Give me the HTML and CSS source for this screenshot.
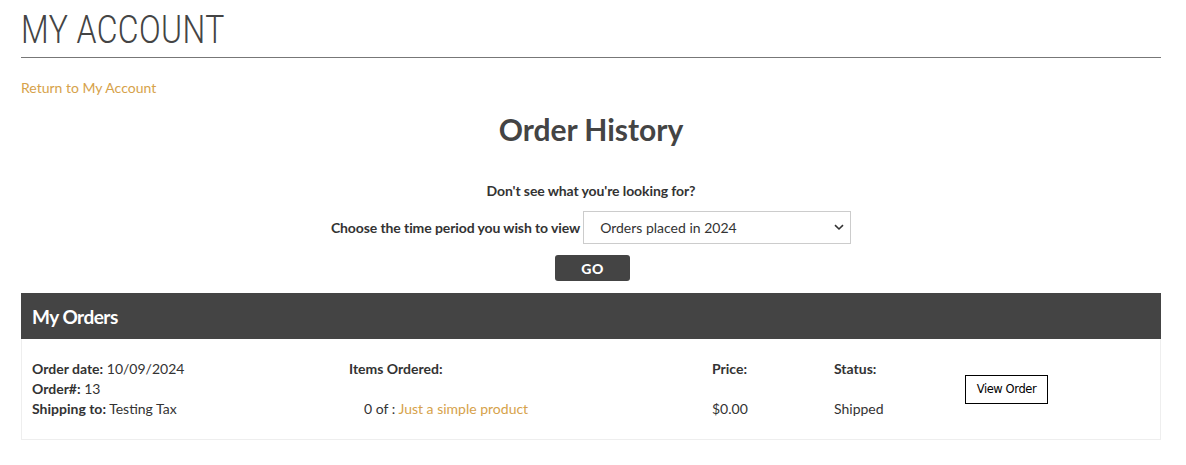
FILE: index.html
```html
<!DOCTYPE html>
<html>
<head>
<meta charset="utf-8">
<link rel="stylesheet" href="styles.css">
</head>
<body>
<div class="page">
  <h1 class="page-title"><span class="page-title-text">MY ACCOUNT</span></h1>
  <a class="back-link" href="#">Return to My Account</a>
  <h2 class="section-title">Order History</h2>
  <form class="filter">
    <p class="filter-hint">Don't see what you're looking for?</p>
    <div class="filter-row">
      <label class="filter-label">Choose the time period you wish to view</label>
      <div class="select">
        <span>Orders placed in 2024</span>
        <svg class="chev" width="10" height="7" viewBox="0 0 10 7"><path d="M1 1.2 L5 5 L9 1.2" fill="none" stroke="#333" stroke-width="1.6"/></svg>
      </div>
    </div>
    <button type="button" class="go">GO</button>
  </form>
  <div class="orders">
    <div class="orders-head">My Orders</div>
    <div class="orders-body">
      <div class="col col-info">
        <div><b>Order date:</b> 10/09/2024</div>
        <div><b>Order#:</b> 13</div>
        <div><b>Shipping to:</b> Testing Tax</div>
      </div>
      <div class="col col-items">
        <div><b>Items Ordered:</b></div>
        <div>&nbsp;</div>
        <div class="item-line">0 of : <a href="#">Just a simple product</a></div>
      </div>
      <div class="col col-price">
        <div><b>Price:</b></div>
        <div>&nbsp;</div>
        <div>$0.00</div>
      </div>
      <div class="col col-status">
        <div><b>Status:</b></div>
        <div>&nbsp;</div>
        <div>Shipped</div>
      </div>
      <div class="col col-action">
        <button type="button" class="view">View Order</button>
      </div>
    </div>
  </div>
</div>
</body>
</html>
```

FILE: styles.css
```css
* { box-sizing: border-box; }
html, body { margin: 0; padding: 0; background: #fff; }
body {
  font-family: Lato, "Open Sans", sans-serif;
  font-size: 14px;
  color: #333;
}
.page {
  width: 1140px;
  margin-left: 21px;
  padding-top: 8px;
}
.page-title {
  margin: 0;
  font-family: Roboto, sans-serif;
  font-weight: 300;
  font-size: 39px;
  letter-spacing: 0.5px;
  color: #444;
  line-height: 44px;
  padding-bottom: 5px;
  border-bottom: 1px solid #777;
}
.page-title-text {
  display: inline-block;
  transform: scaleX(0.82);
  transform-origin: left center;
}
.back-link {
  display: inline-block;
  margin-top: 21px;
  color: #d6a24a;
  text-decoration: none;
  font-size: 14px;
  line-height: 17px;
}
.section-title {
  margin: 15px 0 0;
  text-align: center;
  font-size: 30px;
  font-weight: 700;
  color: #444;
  line-height: 36px;
}
.filter {
  margin-top: 35px;
  display: flex;
  flex-direction: column;
  align-items: center;
}
.filter-hint {
  margin: 0;
  font-weight: 700;
  line-height: 17px;
  color: #333;
  letter-spacing: -0.1px;
}
.filter-row {
  margin-top: 12px;
  display: flex;
  align-items: center;
}
.filter-label {
  font-weight: 700;
  margin-right: 3px;
  letter-spacing: -0.1px;
}
.select {
  width: 268px;
  height: 33px;
  border: 1px solid #ccc;
  display: flex;
  align-items: center;
  justify-content: space-between;
  padding: 0 6px 0 16px;
  color: #333;
}
.go {
  margin-top: 11px;
  margin-left: 3px;
  width: 75px;
  height: 26px;
  background: #444;
  color: #fff;
  border: 0;
  border-radius: 3px;
  font-family: Lato, sans-serif;
  font-weight: 900;
  font-size: 14px;
  letter-spacing: 0.5px;
  padding: 0;
}
.orders {
  margin-top: 12px;
}
.orders-head {
  height: 46px;
  background: #444;
  color: #fff;
  font-weight: 700;
  font-size: 19px;
  letter-spacing: -0.5px;
  display: flex;
  align-items: center;
  padding-left: 11px;
}
.orders-body {
  border: 1px solid #eee;
  border-top: 0;
  display: grid;
  grid-template-columns: 317px 363px 122px 131px 1fr;
  padding: 20px 10px 20px 10px;
  line-height: 20px;
}
.item-line { padding-left: 15px; }
.item-line a { color: #d6a24a; text-decoration: none; }
.col-action {
  display: flex;
  align-items: center;
}
.view {
  font-family: "DejaVu Sans", sans-serif;
  font-size: 11.5px;
  letter-spacing: -0.4px;
  background: #fff;
  color: #000;
  border: 1px solid #000;
  width: 83px;
  height: 29px;
  padding: 0;
}
```
